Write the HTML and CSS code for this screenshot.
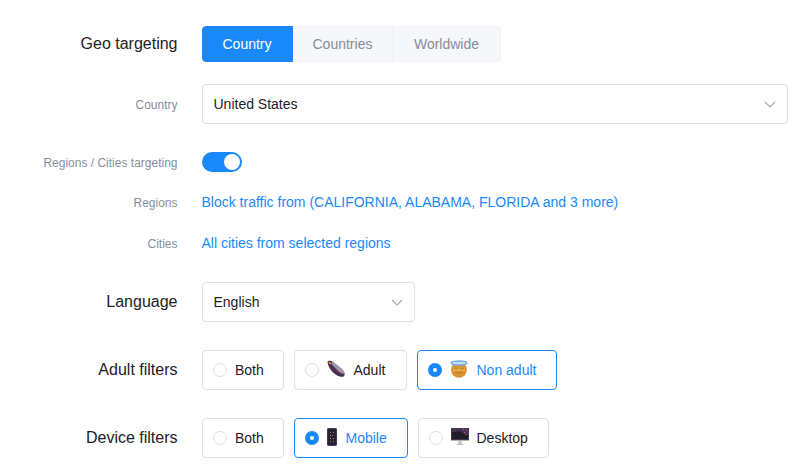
FILE: index.html
```html
<!DOCTYPE html>
<html lang="en">
<head>
  <meta charset="UTF-8">
  <meta name="viewport" content="width=device-width, initial-scale=1.0">
  <title>Targeting</title>
  <link rel="stylesheet" href="styles.css">
</head>
<body>

  <form class="targeting">
    <!-- Geo targeting -->
    <div class="row row-tabs">
      <div class="label title">Geo targeting</div>
      <div class="tabs">
        <div class="tab active">Country</div>
        <div class="tab">Countries</div>
        <div class="tab">Worldwide</div>
      </div>
    </div>

    <div class="row row-country">
      <div class="label">Country</div>
      <div class="select">
        <span>United States</span>
        <svg class="arrow" width="12" height="7" viewBox="0 0 12 7"><path d="M1 1l5 5 5-5"/></svg>
      </div>
    </div>

    <div class="row row-switch">
      <div class="label">Regions / Cities targeting</div>
      <div class="switch"></div>
    </div>

    <div class="row">
      <div class="label">Regions</div>
      <a class="link">Block traffic from (CALIFORNIA, ALABAMA, FLORIDA and 3 more)</a>
    </div>

    <div class="row row-cities">
      <div class="label">Cities</div>
      <a class="link">All cities from selected regions</a>
    </div>

    <!-- Language -->
    <div class="row row-language">
      <div class="label title">Language</div>
      <div class="select small">
        <span>English</span>
        <svg class="arrow" width="12" height="7" viewBox="0 0 12 7"><path d="M1 1l5 5 5-5"/></svg>
      </div>
    </div>

    <!-- Adult filters -->
    <div class="row row-filter">
      <div class="label title">Adult filters</div>
      <div class="options">
        <div class="option both"><span class="radio"></span>Both</div>
        <div class="option adult">
          <span class="radio"></span>
          <svg class="icon" width="18" height="18" viewBox="0 0 18 18">
            <path d="M.5 2C1 .3 4.200 .6 6 2l7 5.500c3 2 5 5 4.600 7.500-.6 2.600-4.600 2.400-8.600-.2C4.500 11.800 1.200 7 .5 2z" fill="#483052"/>
            <path d="M4.500 1.200l8.500 6c3 2 4.700 4.500 4.500 6.500-3 0-6-2-8.500-5L4.500 4z" fill="#a197a8"/>
            <path d="M1 3.500C1 1 3 .5 5 2L3.500 5z" fill="#594044"/>
            <path d="M2 2.500l2 1.500" stroke="#e9a237" stroke-width="1.500"/>
            <path d="M7 8l4 4 5 2.500" fill="none" stroke="#8c3550" stroke-width=".7"/>
          </svg>
          Adult
        </div>
        <div class="option non-adult checked">
          <span class="radio"></span>
          <svg class="icon" width="18" height="18" viewBox="0 0 18 18">
            <circle cx="9" cy="9.800" r="7.900" fill="#d9942d"/>
            <path d="M3 7.500h12v4H3z" fill="#e0a747"/>
            <path d="M4.500 8.500q1.500-1 3 0M10.500 8.500q1.500-1 3 0M5.500 12q3.500 2 7 0" fill="none" stroke="#a56d25" stroke-width=".9"/>
            <ellipse cx="9" cy="3" rx="7.800" ry="2.100" fill="#c8dcef" stroke="#76a9e5" stroke-width="1.500"/>
          </svg>
          Non adult
        </div>
      </div>
    </div>

    <!-- Device filters -->
    <div class="row row-filter">
      <div class="label title">Device filters</div>
      <div class="options">
        <div class="option both"><span class="radio"></span>Both</div>
        <div class="option mobile checked">
          <span class="radio"></span>
          <svg class="icon" width="10" height="18" viewBox="0 0 10 18">
            <rect x=".5" y=".5" width="9" height="17" rx=".8" fill="#29232f" stroke="#49365c"/>
            <path d="M3 4.500h1M6 4.500h1M5 7.500h1M3 13.500h1M6 13.500h1" stroke="#8c718f"/>
            <path d="M3 7.500h1M3 10.500h1" stroke="#e28b38"/>
            <path d="M6 10.500h1" stroke="#4a82b8"/>
          </svg>
          Mobile
        </div>
        <div class="option desktop">
          <span class="radio"></span>
          <svg class="icon" width="18" height="18" viewBox="0 0 18 18">
            <path d="M7.500 13h3l.5 3h-4z" fill="#c9c5cf"/>
            <path d="M5.500 16.500h7" stroke="#c3bfc8"/>
            <rect x="0" y="0" width="18" height="13" fill="#473258"/>
            <path d="M1 4l8-1 3 2 5 2v4H1z" fill="#211f26"/>
            <path d="M12 1.500h1M15 2.500h1M13 4.500h1" stroke="#9a7fa0"/>
            <path d="M14 6.500h2" stroke="#a53b4f"/>
            <path d="M0 12.500h18" stroke="#b8b2c0"/>
          </svg>
          Desktop
        </div>
      </div>
    </div>
  </form>

</body>
</html>
```

FILE: styles.css
```css
body {
  margin: 0;
  background-color: #fff;
  color: #1f2023;
  font-family: 'Liberation Sans', Arial, sans-serif;
  font-size: 14px;
}

.targeting {
  padding: 26px 16px 0 0;
}

.row {
  display: grid;
  grid-template-columns: 177px 1fr;
  column-gap: 25px;
  align-items: center;
  height: 40px;
}

.row-tabs {
  height: 36px;
}

.row-country {
  margin-top: 22px;
}

.row-switch {
  margin-top: 18px;
}

.row-cities {
  margin-top: 1px;
}

.row-language {
  margin-top: 19px;
}

.row-filter {
  margin-top: 28px;
}

.label {
  color: #858e9e;
  font-size: 12px;
  text-align: right;
  padding-top: 1px;
  margin-right: -0.5px;
}

.title {
  color: #1f2023;
  font-size: 16px;
  padding: 0 0 1px;
}

.tabs {
  display: flex;
}

.tab {
  box-sizing: border-box;
  height: 36px;
  padding: 0 20px 0 19.5px;
  border: 1px solid #eff1f5;
  border-left: 0;
  background-color: #f5f7fb;
  color: #858e9e;
  line-height: 34px;
}

.tab:last-child {
  padding: 0 20.5px;
  border-radius: 0 4px 4px 0;
}

.tab.active {
  width: 91px;
  border: 1px solid #1989fa;
  border-radius: 4px 0 0 4px;
  padding: 0 19.5px;
  background-color: #1989fa;
  color: #fff;
}

.select {
  display: flex;
  justify-content: space-between;
  align-items: center;
  box-sizing: border-box;
  height: 40px;
  padding: 0 11px 0 10.5px;
  border: 1px solid #dcdfe6;
  border-radius: 4px;
}

.small {
  width: 213px;
}

.arrow {
  fill: none;
  stroke: #a4abb7;
  stroke-width: 1.2;
}

.switch {
  display: flex;
  justify-content: flex-end;
  box-sizing: border-box;
  width: 40px;
  height: 20px;
  padding: 2px;
  border-radius: 10px;
  background-color: #1989fa;
}

.switch::after {
  content: '';
  width: 16px;
  height: 16px;
  border-radius: 50%;
  background-color: #fff;
}

.link {
  margin-left: -0.5px;
  color: #1989fa;
}

.options {
  display: flex;
  gap: 10px;
}

.option {
  display: flex;
  align-items: center;
  box-sizing: border-box;
  height: 40px;
  padding-left: 10px;
  border: 1px solid #dcdfe6;
  border-radius: 4px;
}

.option.checked {
  border-color: #1989fa;
  color: #1989fa;
}

.both {
  width: 82px;
}

.adult {
  width: 113px;
}

.non-adult {
  width: 140px;
}

.mobile {
  width: 114px;
}

.desktop {
  width: 131px;
}

.radio {
  box-sizing: border-box;
  width: 14px;
  height: 14px;
  margin-right: 8px;
  border: 1px solid #dcdfe6;
  border-radius: 50%;
}

.checked .radio {
  border: 5px solid #1989fa;
}

.icon {
  margin: 0 9px 3px -0.5px;
}

.desktop .icon {
  margin-right: 8px;
}
```
